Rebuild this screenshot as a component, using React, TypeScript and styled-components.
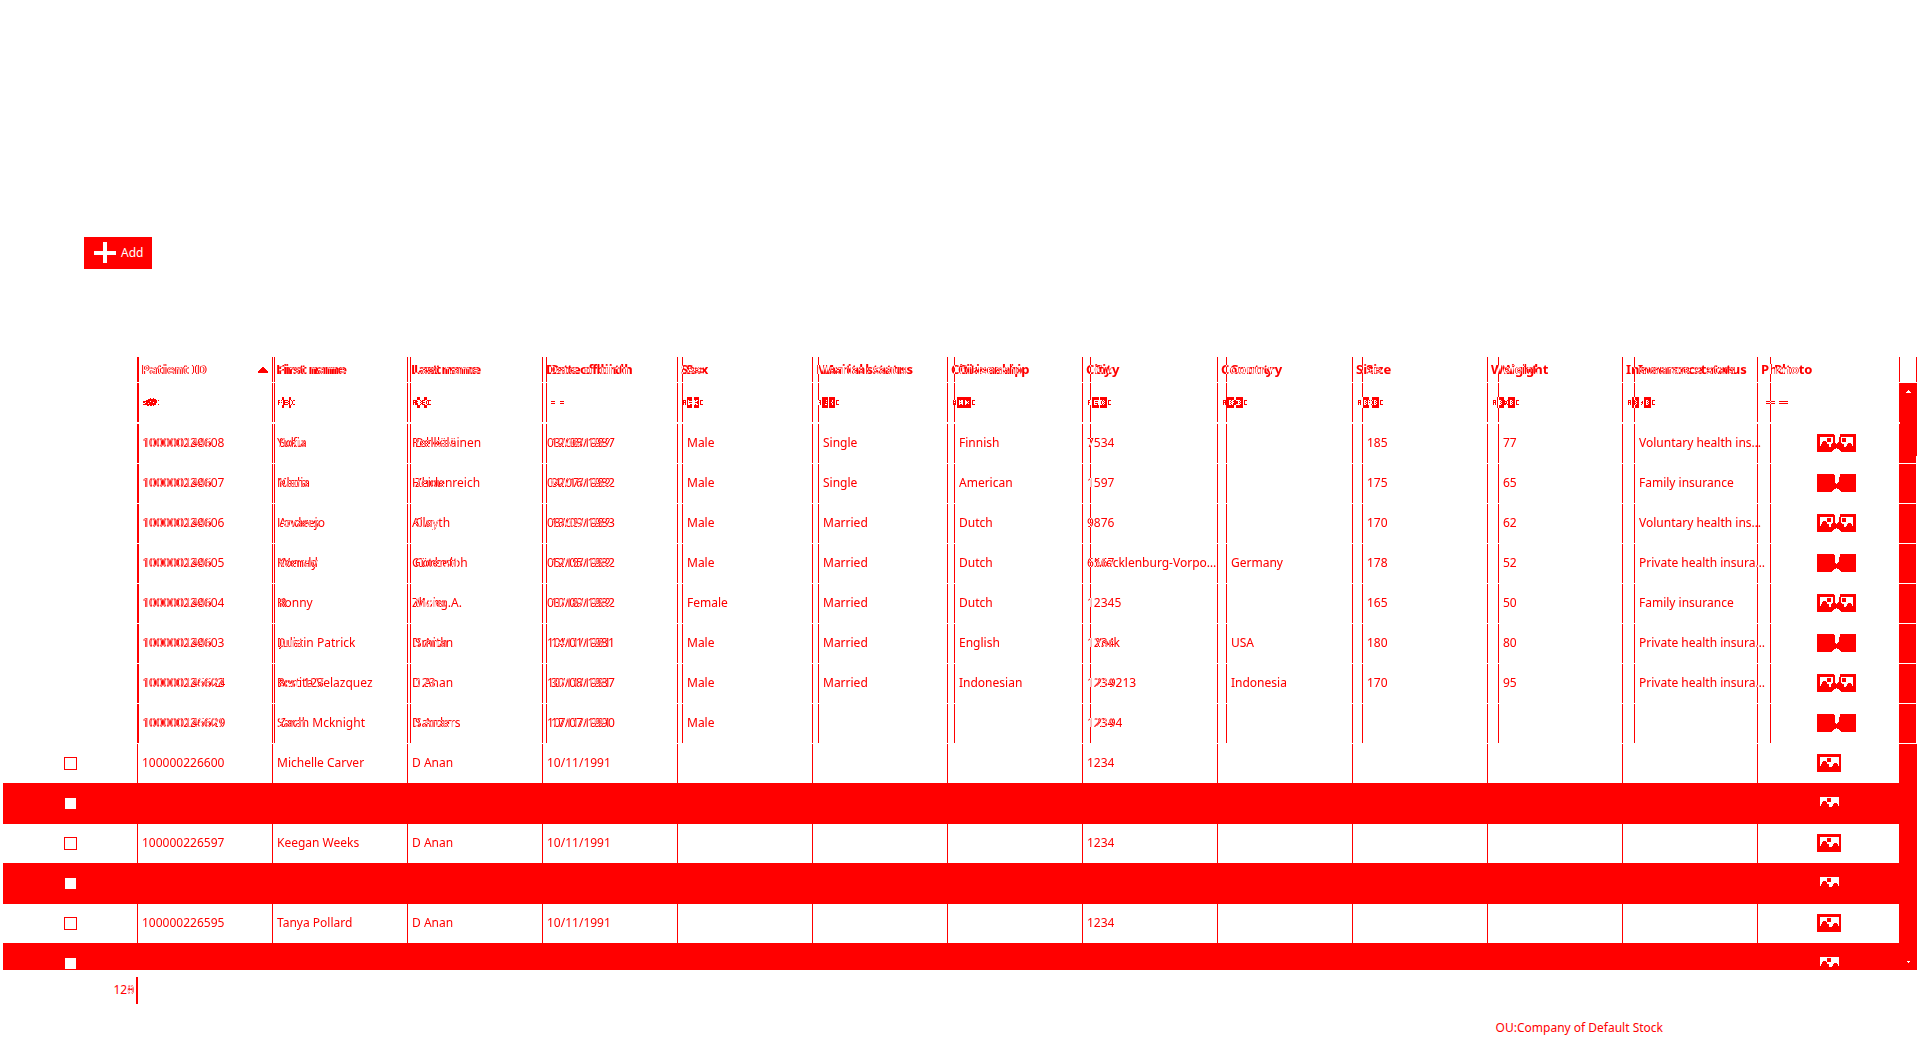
import React from 'react';
import styled, { createGlobalStyle, css } from 'styled-components';

const RED = '#ff0000';
const INVERT = '#00ffff';

const GlobalStyle = createGlobalStyle`
  * { box-sizing: border-box; }
  body { margin: 0; background: #fff; overflow: hidden; }
`;

const Page = styled.main`
  font: 12px/16px "Noto Sans", "DejaVu Sans", sans-serif;
  color: ${RED};
  background: #fff;
`;

const Toolbar = styled.div`
  display: flex;
  padding: 237px 84px 88px;
`;

const AddButton = styled.button`
  display: flex;
  align-items: center;
  gap: 5px;
  height: 32px;
  padding: 0 9px 0 10px;
  border: 0;
  background: ${RED};
  color: #fff;
  font: inherit;
  svg { display: block; margin-bottom: 1px; }
`;

/* Both revisions share one grid cell, so they lie on top of each other. */
const Stack = styled.section`
  display: grid;
  margin: 0 3px;
  isolation: isolate;
  background: #fff;
  > * { grid-area: 1 / 1; }
`;

const Table = styled.table<{ $overlay?: boolean }>`
  display: block;
  min-width: 0;
  color: ${RED};
  thead, tbody { display: block; }
  ${p => p.$overlay
    ? css`color: ${INVERT}; mix-blend-mode: difference; --cols: repeat(13, 136fr) 146fr;`
    : css`margin-right: 17px; --cols: repeat(13, 135fr) 142fr;`}
`;

const Row = styled.tr<{ $height: number; $gap?: number; $band?: boolean }>`
  display: grid;
  grid-template-columns: var(--cols);
  height: ${p => p.$height}px;
  padding-bottom: ${p => p.$gap ?? 0}px;
  overflow: hidden;
  background: ${p => (p.$band ? RED : 'transparent')};
`;

const cell = css`
  display: flex;
  align-items: center;
  min-width: 0;
  padding: 0 4px;
  border-right: 1px solid currentColor;
  text-align: left;
`;

const HeadCell = styled.th`
  ${cell}
  justify-content: space-between;
  padding: 0 4px 2px 3px;
  font-size: 13px;
  font-weight: 700;
  white-space: nowrap;
  svg { display: block; margin-top: 2px; }
`;

const Cell = styled.td<{ $wide?: boolean }>`
  ${cell}
  padding-left: ${p => (p.$wide ? 8 : 4)}px;
  svg { display: block; flex: none; }
`;

const CheckCell = styled.td<{ $cut?: boolean }>`
  ${cell}
  justify-content: center;
  height: ${p => (p.$cut ? '41px' : '100%')};
`;

const PhotoCell = styled(CheckCell)<{ $pair?: boolean }>`
  padding: 0 4px 1px ${p => (p.$pair ? 19 : 4)}px;
  svg { display: block; flex: none; }
`;

const Text = styled.span`
  padding-bottom: 1px;
  overflow: hidden;
  white-space: nowrap;
  text-overflow: ellipsis;
`;

const Check = styled.input`
  appearance: none;
  width: 13px;
  height: 13px;
  margin: 0 0 0 1px;
  border: 1px solid ${RED};
  background: #fff;
`;

const Scroll = styled.div`
  justify-self: end;
  display: flex;
  flex-direction: column;
  width: 17px;
  margin-top: 26px;
  z-index: 1;
`;

const ScrollTop = styled.div`
  display: flex;
  justify-content: center;
  height: 73px;
  padding-top: 7px;
  background: ${RED};
`;

const ScrollTrack = styled.div`
  height: 288px;
  border-right: 1px solid #fff;
  background: repeating-linear-gradient(${RED} 0 7px, #fff 7px 8px, ${RED} 8px 40px);
`;

const ScrollBottom = styled.div`
  display: flex;
  flex: 1;
  align-items: flex-end;
  justify-content: center;
  padding-bottom: 7px;
  background: ${RED};
`;

const CountRow = styled.div`
  display: grid;
  grid-template-columns: 135fr 1779fr;
  margin: 7px 3px 0;
`;

const Count = styled.div`
  display: flex;
  align-items: center;
  justify-content: flex-end;
  height: 27px;
  padding: 0 2px 1px 0;
  border-right: 2px solid ${RED};
`;

const Digits = styled.span`
  display: inline-grid;
  isolation: isolate;
  background: #fff;
  > * { grid-area: 1 / 1; }
`;

const Changed = styled.span`
  color: ${INVERT};
  mix-blend-mode: difference;
`;

const Footer = styled.footer`
  display: flex;
  justify-content: flex-end;
  padding: 16px 257px 0 0;
`;

const PlusIcon = () => (
  <svg width="22" height="21" fill="#fff" shapeRendering="crispEdges" aria-hidden="true">
    <path d="M9 0h4v9h9v4h-9v8H9v-8H0V9h9z" />
  </svg>
);

const TextFilterIcon = () => (
  <svg width="17" height="11" fill="currentColor" fillRule="evenodd" shapeRendering="crispEdges" aria-hidden="true">
    <path d="M1 3h3v5H3V6H2v2H1zM2 4v1h1V4z" />
    <path d="M5 0h7v11H5zM7 3v5h2V7h1V6H9V5h1V4H9V3zM8 4h1v1H8zM8 6h1v1H8z" />
    <path d="M13 3h3v1h-2v3h2v1h-3z" />
  </svg>
);

const EqualsIcon = () => (
  <svg width="9" height="3" fill="currentColor" shapeRendering="crispEdges" aria-hidden="true">
    <path d="M0 0h9v1H0zM0 2h9v1H0z" />
  </svg>
);

const SearchIcon = () => (
  <svg width="17" height="9" fill="currentColor" shapeRendering="crispEdges" aria-hidden="true">
    <path d="M1 3h3V2h2V1h2V0h1v1h2V0h1v1h2v1h1v3h-1v2h-2v1h-1V7h-1v1H8V7H7v1H5V7H1V6h2V5H1zM16 2h1v1h-1zM16 6h1v1h-1z" />
    <path d="M3 4h1v1H3zM6 5h1v1H6zM8 3h1v1H8zM11 4h1v1h-1z" fill="#fff" />
  </svg>
);

const SortIcon = () => (
  <svg width="10" height="6" fill="currentColor" shapeRendering="crispEdges" aria-hidden="true">
    <path d="M4 0h2v1h1v1h1v1h1v1h1v2H0V4h1V3h1V2h1V1h1z" />
  </svg>
);

const PhotoIcon = () => (
  <svg width="24" height="18" shapeRendering="crispEdges" aria-hidden="true">
    <path d="M0 0h24v18H0z" fill={RED} />
    <path
      d="M3 3H22V12H21V10H20V9H17V10H16V12H15V13H12V10H10V8H9V7H6V8H5V10H4V12H3z"
      fill="#fff"
    />
    <path d="M10 4h4v4h-4z" fill={RED} />
  </svg>
);

const PhotoPair = ({ solid }: { solid?: boolean }) => (
  <svg width="39" height="18" shapeRendering="crispEdges" aria-hidden="true">
    <path d="M0 0h17v1h1v8h1v1h1V9h1V8h1V3h1V0h16v18H24v-1h-1v-1h-1v-1h-2v-1h-1v1h-2v1h-1v1h-1v1H0z" fill={RED} />
    {!solid && (
      <>
        <g fill="#fff">
          <path d="M3 3H16V9H15V10H14V13H12V10H10V8H9V7H6V8H5V10H4V12H3z" />
          <path d="M24 3H36V12H35V10H34V9H31V10H30V12H29V13H27V10H25V9H24z" />
        </g>
        <path d="M10 4h4v4h-4zM25 4h4v4h-4z" fill={RED} />
      </>
    )}
  </svg>
);

const UpArrow = () => (
  <svg width="5" height="3" fill="#fff" shapeRendering="crispEdges" aria-hidden="true">
    <path d="M2 0h1v1h1v1h1v1H0V2h1V1h1z" />
  </svg>
);

const DownArrow = () => (
  <svg width="3" height="2" fill="#fff" shapeRendering="crispEdges" aria-hidden="true">
    <path d="M0 0h3v1H2v1H1V1H0z" />
  </svg>
);

const headings = [
  'Patient ID', 'First name', 'Last name', 'Date of birth', 'Sex', 'Marital status',
  'Citizenship', 'City', 'Country', 'Size', 'Weight', 'Insurance status', 'Photo',
];

type Values = Record<number, string>;

const make = (id: string, first: string, last: string, birth: string, city: string): Values => ({
  0: id, 1: first, 2: last, 3: birth, 7: city,
});

const currentRows: Values[] = [
  make('100000226608', 'Yuku', 'Pehkäläinen', '03/06/1957', '7534'),
  make('100000226607', 'Nadia', 'Heidenreich', '04/07/1952', '1597'),
  make('100000226606', 'Lovarejo', 'Alwyth', '08/02/1957', '9876'),
  make('100000226605', 'Konrad', 'Gütersloh', '05/15/1992', '6567'),
  make('100000226604', 'Ronny', 'Zhang.A.', '03/18/1992', '12345'),
  make('100000226603', 'Dustin Patrick', 'D Anan', '10/11/1961', '1234'),
  make('100000226602', 'Benita Velazquez', 'D Anan', '10/11/1991', '1234'),
  make('100000226601', 'Sarah Mcknight', 'D Anan', '10/11/1991', '1234'),
];

const lowerRows: (Values | null)[] = [
  make('100000226600', 'Michelle Carver', 'D Anan', '10/11/1991', '1234'),
  null,
  make('100000226597', 'Keegan Weeks', 'D Anan', '10/11/1991', '1234'),
  null,
  make('100000226595', 'Tanya Pollard', 'D Anan', '10/11/1991', '1234'),
  null,
];

const previousRows: Values[] = [
  { 0: '1000001446', 1: 'Sofia', 2: 'Dekker', 3: '12/08/1987', 4: 'Male', 5: 'Single', 6: 'Finnish', 9: '185', 10: '77', 11: 'Voluntary health insurance' },
  { 0: '1000001446', 1: 'Klara', 2: 'Zhou', 3: '02/16/1982', 4: 'Male', 5: 'Single', 6: 'American', 9: '175', 10: '65', 11: 'Family insurance' },
  { 0: '1000001446', 1: 'Anders', 2: 'Clay', 3: '13/09/1983', 4: 'Male', 5: 'Married', 6: 'Dutch', 9: '170', 10: '62', 11: 'Voluntary health insurance' },
  { 0: '1000001446', 1: 'Wendy', 2: 'Corbett', 3: '12/05/1982', 4: 'Male', 5: 'Married', 6: 'Dutch', 7: 'Mecklenburg-Vorpommern', 8: 'Germany', 9: '178', 10: '52', 11: 'Private health insurance' },
  { 0: '1000001446', 1: 'R', 2: 'Meier', 3: '10/09/1982', 4: 'Female', 5: 'Married', 6: 'Dutch', 9: '165', 10: '50', 11: 'Family insurance' },
  { 0: '1000001446', 1: 'Julia', 2: 'Smith', 3: '14/01/1981', 4: 'Male', 5: 'Married', 6: 'English', 7: 'York', 8: 'USA', 9: '180', 10: '80', 11: 'Private health insurance' },
  { 0: '100000145624', 1: 'test 123', 2: '123', 3: '30/08/1987', 4: 'Male', 5: 'Married', 6: 'Indonesian', 7: '219213', 8: 'Indonesia', 9: '170', 10: '95', 11: 'Private health insurance' },
  { 0: '100000145629', 1: 'Zach', 2: 'Sanders', 3: '17/07/1990', 4: 'Male', 7: '2194' },
];

function Heading({ overlay }: { overlay?: boolean }) {
  return (
    <thead>
      <Row $height={26} $gap={1}>
        <HeadCell aria-label="Select" />
        {headings.map((h, i) => (
          <HeadCell key={h} scope="col">
            {h}
            {i === 0 && !overlay && <SortIcon />}
          </HeadCell>
        ))}
      </Row>
      <Row $height={41} $gap={2}>
        <Cell />
        {headings.map((h, i) => (
          <Cell key={h} $wide={i === 3 || i === 12}>
            {i === 0 ? (!overlay && <SearchIcon />) : i === 3 || i === 12 ? <EqualsIcon /> : <TextFilterIcon />}
          </Cell>
        ))}
      </Row>
    </thead>
  );
}

function TextCells({ values }: { values: Values }) {
  return (
    <>
      {headings.slice(0, 12).map((h, i) => (
        <Cell key={h}>{values[i] && <Text>{values[i]}</Text>}</Cell>
      ))}
    </>
  );
}

export default function App() {
  return (
    <Page>
      <GlobalStyle />
      <Toolbar>
        <AddButton type="button"><PlusIcon />Add</AddButton>
      </Toolbar>
      <Stack>
        <Table>
          <Heading />
          <tbody>
            {currentRows.map((values, i) => (
              <Row key={values[0]} $height={40} $gap={1}>
                <Cell />
                <TextCells values={values} />
                <PhotoCell $pair><PhotoPair solid={i % 2 === 1} /></PhotoCell>
              </Row>
            ))}
            {lowerRows.map((values, i) => (
              <Row key={i} $height={values ? 39 : i === 5 ? 27 : 41} $band={!values}>
                <CheckCell $cut={i === 5}>
                  <Check type="checkbox" aria-label="Select patient" />
                </CheckCell>
                <TextCells values={values ?? {}} />
                <PhotoCell $cut={i === 5}><PhotoIcon /></PhotoCell>
              </Row>
            ))}
          </tbody>
        </Table>
        <Table $overlay aria-hidden="true">
          <Heading overlay />
          <tbody>
            {previousRows.map((values, i) => (
              <Row key={i} $height={40} $gap={1}>
                <Cell />
                <TextCells values={values} />
                <Cell />
              </Row>
            ))}
          </tbody>
        </Table>
        <Scroll>
          <ScrollTop><UpArrow /></ScrollTop>
          <ScrollTrack />
          <ScrollBottom><DownArrow /></ScrollBottom>
        </Scroll>
      </Stack>
      <CountRow>
        <Count>12<Digits><span>8</span><Changed aria-hidden="true">0</Changed></Digits></Count>
      </CountRow>
      <Footer>OU:Company of Default Stock</Footer>
    </Page>
  );
}
